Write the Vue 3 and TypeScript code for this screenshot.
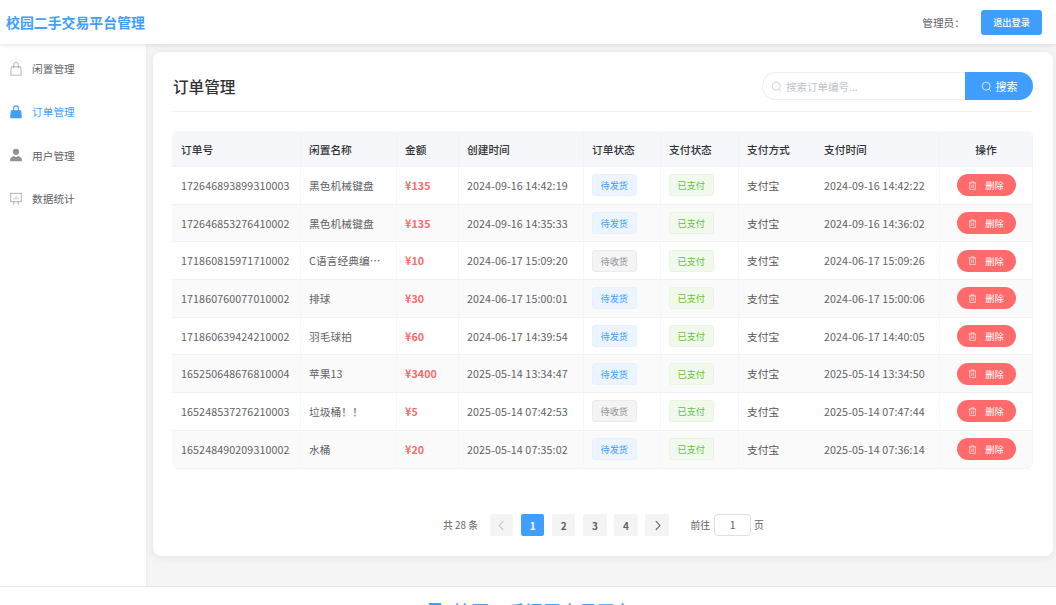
<template>
  <div class="page">
    <header class="topbar">
      <div class="logo">校园二手交易平台管理</div>
      <div class="user">
        <span class="admin">管理员：</span>
        <button class="logout">退出登录</button>
      </div>
    </header>

    <div class="body">
      <aside class="sidebar">
        <div v-for="m in menus" :key="m.name" class="menu-item" :class="{ active: m.active }">
          <svg v-if="m.icon === 'bag'" class="menu-icon" viewBox="0 0 16 16" fill="none" stroke="currentColor" stroke-width="0.8">
            <path d="M2.500 5.500h11l.5 9.500H2z" />
            <path d="M5.500 7.500V3a2.500 2.500 0 0 1 5 0V7.500" />
          </svg>
          <svg v-else-if="m.icon === 'bagFill'" class="menu-icon" viewBox="0 0 16 16">
            <path d="M2.200 6h11.600l.9 8a1 1 0 0 1-1 1H2.300a1 1 0 0 1-1-1z" fill="currentColor" />
            <path d="M5.300 7V3.700a2.700 2.700 0 0 1 5.400 0V7" fill="none" stroke="currentColor" stroke-width="1.300" />
          </svg>
          <svg v-else-if="m.icon === 'user'" class="menu-icon" viewBox="0 0 16 16" fill="currentColor">
            <circle cx="8" cy="4.400" r="3.600" />
            <path d="M1 15c0-3.600 2.300-5.800 5-6l2 1.600L10 9c2.700.2 5 2.400 5 6z" />
          </svg>
          <svg v-else class="menu-icon" viewBox="0 0 16 16" fill="none" stroke="currentColor" stroke-width="0.8">
            <path d="M1 1.500h14M2 1.500v9.500h12V1.500" />
            <path d="M5.500 8.500V7M8 8.500V5M10.500 8.500V6.500M6 11l-1.300 3.800M10 11l1.300 3.800" />
          </svg>
          <span>{{ m.name }}</span>
        </div>
      </aside>

      <main class="main">
        <section class="card">
          <div class="card-head">
            <h2>订单管理</h2>
            <div class="search">
              <div class="search-input">
                <svg class="search-icon" viewBox="0 0 16 16" fill="none" stroke="currentColor" stroke-width="1.100">
                  <circle cx="7.500" cy="7.500" r="5.800" />
                  <path d="M12 12l2.500 2.500" />
                </svg>
                <span>搜索订单编号...</span>
              </div>
              <button class="search-btn">
                <svg class="search-icon" viewBox="0 0 16 16" fill="none" stroke="currentColor" stroke-width="1.100">
                  <circle cx="7.500" cy="7.500" r="5.800" />
                  <path d="M12 12l2.500 2.500" />
                </svg>
                搜索
              </button>
            </div>
          </div>

          <table class="orders">
            <colgroup>
              <col v-for="w in colWidths" :key="w.id" :style="{ width: w.width + 'px' }" />
            </colgroup>
            <thead>
              <tr>
                <th>订单号</th>
                <th>闲置名称</th>
                <th>金额</th>
                <th>创建时间</th>
                <th>订单状态</th>
                <th>支付状态</th>
                <th>支付方式</th>
                <th>支付时间</th>
                <th class="center">操作</th>
              </tr>
            </thead>
            <tbody>
              <tr v-for="o in orders" :key="o.no">
                <td>{{ o.no }}</td>
                <td>{{ o.name }}</td>
                <td class="price">¥{{ o.price }}</td>
                <td>{{ o.created }}</td>
                <td>
                  <span class="tag" :class="o.status === '待发货' ? 'tag-blue' : 'tag-gray'">{{ o.status }}</span>
                </td>
                <td><span class="tag tag-green">已支付</span></td>
                <td class="pay">支付宝</td>
                <td>{{ o.paid }}</td>
                <td class="center">
                  <button class="del">
                    <svg class="del-icon" viewBox="0 0 16 16" fill="none" stroke="currentColor" stroke-width="1.100">
                      <path d="M1.500 3.500h13M5.500 3.500V1.500h5v2M3 3.500v11.500h10V3.500M6.500 6.500v5.500M9.500 6.500v5.500" />
                    </svg>
                    <span>删除</span>
                  </button>
                </td>
              </tr>
            </tbody>
          </table>

          <div class="pager">
            <span class="total">共 28 条</span>
            <button class="pg disabled">
              <svg class="chev" viewBox="0 0 10 10" fill="none" stroke="currentColor" stroke-width="1"><path d="M6.500 1L2.800 5l3.700 4" /></svg>
            </button>
            <button v-for="p in pages" :key="p" class="pg" :class="{ current: p === 1 }">{{ p }}</button>
            <button class="pg">
              <svg class="chev" viewBox="0 0 10 10" fill="none" stroke="currentColor" stroke-width="1"><path d="M3.500 1L7.200 5 3.500 9" /></svg>
            </button>
            <span class="jump">前往</span>
            <span class="jump-box">1</span>
            <span class="jump-end">页</span>
          </div>
        </section>
      </main>
    </div>

    <footer class="footer">
      <svg class="foot-icon" viewBox="0 0 16 16"><rect x="1" y="1" width="14" height="14" rx="1" fill="#409eff" /></svg>
      <span>校园二手闲置交易平台</span>
    </footer>
  </div>
</template>

<script setup lang="ts">
interface Order {
  no: string
  name: string
  price: number
  created: string
  status: string
  paid: string
}

const menus = [
  { name: '闲置管理', icon: 'bag', active: false },
  { name: '订单管理', icon: 'bagFill', active: true },
  { name: '用户管理', icon: 'user', active: false },
  { name: '数据统计', icon: 'chart', active: false }
]

const colWidths = [129, 96, 62, 125, 77, 78, 77, 124, 93].map((width, id) => ({ id, width }))
const pages = [1, 2, 3, 4]

const orders: Order[] = [
  { no: '172646893899310003', name: '黑色机械键盘', price: 135, created: '2024-09-16 14:42:19', status: '待发货', paid: '2024-09-16 14:42:22' },
  { no: '172646853276410002', name: '黑色机械键盘', price: 135, created: '2024-09-16 14:35:33', status: '待发货', paid: '2024-09-16 14:36:02' },
  { no: '171860815971710002', name: 'C语言经典编…', price: 10, created: '2024-06-17 15:09:20', status: '待收货', paid: '2024-06-17 15:09:26' },
  { no: '171860760077010002', name: '排球', price: 30, created: '2024-06-17 15:00:01', status: '待发货', paid: '2024-06-17 15:00:06' },
  { no: '171860639424210002', name: '羽毛球拍', price: 60, created: '2024-06-17 14:39:54', status: '待发货', paid: '2024-06-17 14:40:05' },
  { no: '165250648676810004', name: '苹果13', price: 3400, created: '2025-05-14 13:34:47', status: '待发货', paid: '2025-05-14 13:34:50' },
  { no: '165248537276210003', name: '垃圾桶！！', price: 5, created: '2025-05-14 07:42:53', status: '待收货', paid: '2025-05-14 07:47:44' },
  { no: '165248490209310002', name: '水桶', price: 20, created: '2025-05-14 07:35:02', status: '待发货', paid: '2025-05-14 07:36:14' }
]
</script>

<style>
html, body { margin: 0; overflow: hidden; }
</style>

<style scoped>
.page {
  width: 1056px;
  height: 605px;
  overflow: hidden;
  display: flex;
  flex-direction: column;
  background: #f5f5f5;
  font-family: "Noto Sans CJK SC", "Noto Sans", sans-serif;
  font-size: 10.7px;
  color: #606266;
}
.topbar {
  flex: none;
  height: 44px;
  background: #fff;
  box-shadow: 0 1px 5px rgba(0,0,0,0.12);
  position: relative;
  z-index: 2;
  display: flex;
  align-items: center;
  justify-content: space-between;
  padding: 0 14px 0 6px;
}
.logo { color: #409eff; font-size: 13.900px; font-weight: 700; }
.user { display: flex; align-items: center; gap: 16px; }
.admin { font-size: 10.7px; color: #606266; }
.logout {
  width: 61px;
  height: 25px;
  padding: 0;
  border: none;
  border-radius: 3px;
  background: #409eff;
  color: #fff;
  font: inherit;
  font-size: 9.200px;
  font-weight: 500;
}
.body { flex: none; height: 542px; display: flex; }
.sidebar {
  flex: none;
  width: 146px;
  background: #fff;
  padding-top: 3px;
  box-sizing: border-box;
  box-shadow: 1px 0 4px rgba(0,0,0,0.04);
}
.menu-item {
  height: 43.300px;
  display: flex;
  align-items: center;
  padding-left: 9px;
  gap: 9px;
  color: #606266;
}
.menu-item.active { color: #409eff; }
.menu-icon { width: 14px; height: 14px; color: #909399; }
.active .menu-icon { color: #409eff; }
.main { flex: 1; padding: 8px 3px 0 7px; min-width: 0; }
.card {
  height: 504px;
  box-sizing: border-box;
  background: #fff;
  border-radius: 8px;
  box-shadow: 0 1px 8px rgba(0,0,0,0.08);
  padding: 20px 20px 0 19px;
}
.card-head {
  height: 39px;
  display: flex;
  align-items: flex-start;
  justify-content: space-between;
  border-bottom: 1px solid #f0f2f5;
}
.card-head h2 {
  margin: 0 0 0 1px;
  font-size: 15.600px;
  line-height: 29px;
  font-weight: 500;
  color: #303133;
}
.search { display: flex; height: 28px; }
.search-input {
  width: 203px;
  box-sizing: border-box;
  border: 1px solid #ebeef2;
  border-right: none;
  border-radius: 14px 0 0 14px;
  display: flex;
  align-items: center;
  gap: 4px;
  padding-left: 8px;
  font-size: 10.500px;
  color: #c0c4cc;
}
.search-icon { width: 11px; height: 11px; }
.search-btn {
  width: 68px;
  padding: 0;
  border: none;
  border-radius: 0 14px 14px 0;
  background: #409eff;
  color: #fff;
  font: inherit;
  font-size: 11px;
  display: flex;
  align-items: center;
  justify-content: center;
  gap: 4px;
}
.orders {
  margin-top: 19px;
  width: 861px;
  table-layout: fixed;
  border-collapse: separate;
  border-spacing: 0;
  border-radius: 6px;
  overflow: hidden;
}
.orders th {
  height: 36px;
  box-sizing: border-box;
  padding: 2px 8px 0;
  background: #f5f7fa;
  text-align: left;
  font-weight: 500;
  color: #303133;
  border-bottom: 1px solid #f0f2f5;
  border-right: 1px solid #f0f2f5;
}
.orders th:first-child, .orders td:first-child { padding-left: 9px; }
.orders td {
  height: 37.700px;
  box-sizing: border-box;
  padding: 0 8px;
  white-space: nowrap;
  overflow: hidden;
  letter-spacing: 0.1px;
  border-bottom: 1px solid #f0f2f5;
  border-right: 1px solid #f5f6f8;
}
.orders td:nth-child(7), .orders th:nth-child(7) { padding-right: 0; border-right: none; }
.orders tbody tr:nth-child(even) td { background: #fafafa; }
.orders .center { text-align: center; }
.orders .price { color: #f56c6c; font-weight: 700; }
.orders .pay { color: #555; }
.tag {
  display: inline-block;
  height: 22px;
  line-height: 20px;
  box-sizing: border-box;
  width: 44.500px;
  text-align: center;
  border: 1px solid;
  border-radius: 3px;
  font-size: 9.200px;
  letter-spacing: 0;
  vertical-align: middle;
}
.tag-blue { background: #ecf5ff; border-color: #e6f1fe; color: #409eff; }
.tag-green { background: #f0f9eb; border-color: #e8f6df; color: #67c23a; }
.tag-gray { background: #f4f4f5; border-color: #ececee; color: #909399; }
.del {
  width: 59px;
  height: 22px;
  padding: 0;
  border: none;
  border-radius: 11px;
  background: #ff6b6b;
  color: #fff;
  font: inherit;
  font-size: 9.200px;
  letter-spacing: 0;
  display: inline-flex;
  align-items: center;
  justify-content: center;
  gap: 8px;
  vertical-align: middle;
}
.del-icon { width: 9px; height: 9px; }
.pager {
  margin-top: 45px;
  padding-left: 2px;
  display: flex;
  align-items: center;
  justify-content: center;
  height: 23px;
  font-size: 9.800px;
}
.total { margin-right: 12px; }
.pg {
  width: 23.300px;
  height: 22px;
  padding: 0;
  margin-right: 7.800px;
  border: none;
  border-radius: 2px;
  background: #f4f4f5;
  color: #606266;
  font: inherit;
  font-weight: 700;
  font-size: 10px;
  display: flex;
  align-items: center;
  justify-content: center;
}
.pg.current { background: #409eff; color: #fff; }
.pg.disabled { color: #c0c4cc; }
.chev { width: 11px; height: 11px; }
.jump { margin-left: 14px; margin-right: 4px; }
.jump-box {
  width: 37px;
  height: 22px;
  box-sizing: border-box;
  border: 1px solid #dcdfe6;
  border-radius: 4px;
  text-align: center;
  line-height: 20px;
  font-size: 10.500px;
}
.jump-end { margin-left: 3px; }
.footer {
  flex: none;
  height: 19px;
  box-sizing: border-box;
  background: #fff;
  border-top: 1px solid #e8e8e8;
  display: flex;
  align-items: flex-start;
  justify-content: center;
  gap: 11px;
  padding: 11px 0 0 5px;
  font-size: 18px;
  line-height: 26px;
  color: #409eff;
  font-weight: 500;
}
.foot-icon { width: 14px; height: 14px; flex: none; margin-top: 4px; }
</style>
